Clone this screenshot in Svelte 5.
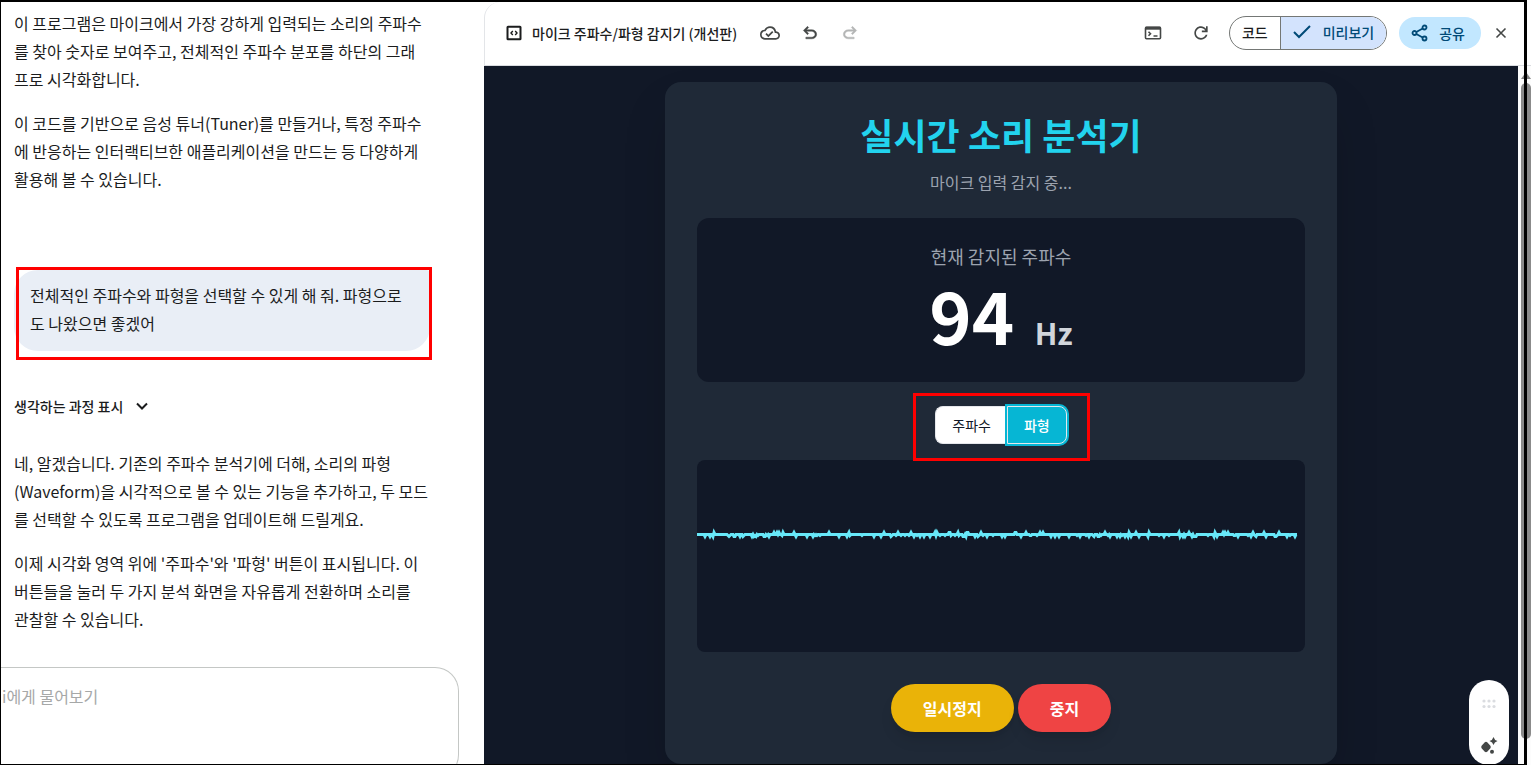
<script lang="ts">
  let mode: 'frequency' | 'waveform' = 'waveform';
  let view: 'code' | 'preview' = 'preview';
  let prompt = '';

  const frequency = 94;

  // small deterministic noise so the idle signal is stable between renders
  function buildWave(width: number, center: number) {
    let seed = 11;
    const points: string[] = [];
    for (let x = 0; x <= width; x += 1) {
      seed = (seed * 1103515245 + 12345) % 2147483648;
      const n = seed / 2147483648;
      let offset = 0;
      if (n > 0.92) offset = -2;
      else if (n < 0.1) offset = 2;
      else if (n < 0.18) offset = 1;
      points.push(`${x},${center + offset}`);
    }
    return points.join(' ');
  }

  const wave = buildWave(600, 74.5);
</script>

<div class="app">
  <aside class="chat">
    <div class="message">
      <p>이 프로그램은 마이크에서 가장 강하게 입력되는 소리의 주파수를 찾아 숫자로 보여주고, 전체적인 주파수 분포를 하단의 그래<br />프로 시각화합니다.</p>
      <p>이 코드를 기반으로 음성 튜너(Tuner)를 만들거나, 특정 주파수에 반응하는 인터랙티브한 애플리케이션을 만드는 등 다양하게 활용해 볼 수 있습니다.</p>
    </div>

    <div class="bubble">
      <p>전체적인 주파수와 파형을 선택할 수 있게 해 줘. 파형으로도 나왔으면 좋겠어</p>
      <span class="marker marker-bubble"></span>
    </div>

    <button class="thoughts" type="button">
      생각하는 과정 표시
      <svg width="14" height="14" viewBox="0 0 14 14" fill="none" stroke="currentColor" stroke-width="2">
        <path d="M2 4.5 7 9.5l5-5" />
      </svg>
    </button>

    <div class="message">
      <p>네, 알겠습니다. 기존의 주파수 분석기에 더해, 소리의 파형(Waveform)을 시각적으로 볼 수 있는 기능을 추가하고, 두 모드를 선택할 수 있도록 프로그램을 업데이트해 드릴게요.</p>
      <p>이제 시각화 영역 위에 '주파수'와 '파형' 버튼이 표시됩니다. 이 버튼들을 눌러 두 가지 분석 화면을 자유롭게 전환하며 소리를<br />관찰할 수 있습니다.</p>
    </div>

    <textarea class="prompt" bind:value={prompt} placeholder="i에게 물어보기" aria-label="i에게 물어보기"></textarea>
  </aside>

  <main class="panel">
    <header class="toolbar">
      <svg width="16" height="16" viewBox="0 0 16 16" fill="none" stroke="currentColor" stroke-width="2">
        <rect x="1.500" y="1.800" width="13" height="12.400" rx=".5" />
        <path d="M6.800 6 5 8l1.800 2M9.200 6 11 8l-1.800 2" stroke-width="1.400" />
      </svg>
      <h1>마이크 주파수/파형 감지기 (개선판)</h1>
      <button class="icon-button" type="button" aria-label="저장됨">
        <svg width="20" height="20" viewBox="0 0 24 24" fill="currentColor">
          <path d="M19.350 10.040A7.490 7.490 0 0 0 12 4C9.110 4 6.600 5.640 5.350 8.040A5.994 5.994 0 0 0 0 14c0 3.310 2.690 6 6 6h13c2.760 0 5-2.240 5-5 0-2.640-2.050-4.780-4.650-4.960zM19 18H6c-2.210 0-4-1.790-4-4 0-2.050 1.530-3.760 3.560-3.970l1.070-.110.500-.950A5.469 5.469 0 0 1 12 6c2.620 0 4.880 1.860 5.390 4.430l.300 1.500 1.530.110A2.980 2.980 0 0 1 22 15c0 1.650-1.350 3-3 3zm-9-3.820-2.090-2.090L6.500 13.500 10 17l6.010-6.010-1.410-1.410z" />
        </svg>
      </button>
      <button class="icon-button" type="button" aria-label="실행취소">
        <svg width="20" height="20" viewBox="0 0 24 24" fill="currentColor" stroke="currentColor" stroke-width=".5">
          <path d="M7 19v-2h7.100c1.050 0 1.960-.330 2.740-1s1.160-1.500 1.160-2.500-.390-1.830-1.160-2.500-1.690-1-2.740-1H7.800l2.600 2.600L9 14 4 9l5-5 1.400 1.400L7.800 8h6.300c1.620 0 3 .530 4.160 1.580S20 11.930 20 13.500s-.580 2.880-1.740 3.930S15.720 19 14.100 19z" />
        </svg>
      </button>
      <button class="icon-button redo" type="button" aria-label="다시 실행" disabled>
        <svg width="20" height="20" viewBox="0 0 24 24" fill="currentColor" stroke="currentColor" stroke-width=".5">
          <path d="M17 19v-2H9.900c-1.050 0-1.960-.330-2.740-1S6 14.500 6 13.500s.390-1.830 1.160-2.500 1.690-1 2.740-1h6.300l-2.600 2.600L15 14l5-5-5-5-1.400 1.400L16.200 8H9.900c-1.620 0-3 .530-4.160 1.580S4 11.930 4 13.500s.580 2.880 1.740 3.930S8.280 19 9.900 19z" />
        </svg>
      </button>

      <div class="toolbar-end">
        <button class="icon-button" type="button" aria-label="콘솔">
          <svg width="20" height="20" viewBox="0 0 20 20" fill="none" stroke="currentColor" stroke-width="1.600">
            <rect x="2.500" y="4.200" width="15" height="11.600" rx="1" />
            <path d="M2.500 5.200h15" stroke-width="3" />
            <path d="m5.500 8.700 2 2-2 2M10.500 13h4" />
          </svg>
        </button>
        <button class="icon-button refresh" type="button" aria-label="새로고침">
          <svg width="20" height="20" viewBox="0 0 24 24" fill="currentColor">
            <path d="M12 20c-2.230 0-4.130-.780-5.680-2.330S4 14.230 4 12s.780-4.130 2.330-5.680S9.770 4 12 4c1.150 0 2.250.240 3.300.710S17.250 5.870 18 6.750V4h2v7h-7V9h4.200a5.930 5.930 0 0 0-2.190-2.200A5.860 5.860 0 0 0 12 6c-1.670 0-3.080.580-4.250 1.750S6 10.330 6 12s.580 3.080 1.750 4.250S10.330 18 12 18c1.280 0 2.440-.370 3.480-1.100s1.750-1.700 2.170-2.900h2.100a7.850 7.850 0 0 1-2.950 4.350A7.740 7.740 0 0 1 12 20z" />
          </svg>
        </button>
        <div class="switch">
          <button type="button" class:active={view === 'code'} on:click={() => (view = 'code')}>코드</button>
          <button type="button" class:active={view === 'preview'} on:click={() => (view = 'preview')}>
            <svg width="18" height="14" viewBox="0 0 18 14" fill="none" stroke="currentColor" stroke-width="2">
              <path d="m1 7 5 5L17 1" />
            </svg>
            미리보기
          </button>
        </div>
        <button class="share" type="button">
          <svg width="18" height="18" viewBox="0 0 18 18" fill="none" stroke="currentColor" stroke-width="1.800">
            <circle cx="13.500" cy="3.500" r="2" />
            <circle cx="3.500" cy="9" r="2" />
            <circle cx="13.500" cy="14.500" r="2" />
            <path d="m5.300 8 6.400-3.500M5.300 10l6.400 3.500" />
          </svg>
          공유
        </button>
        <button class="icon-button close" type="button" aria-label="닫기">
          <svg width="12" height="12" viewBox="0 0 12 12" fill="none" stroke="currentColor" stroke-width="1.600">
            <path d="m1.500 1.500 9 9M10.500 1.500l-9 9" />
          </svg>
        </button>
      </div>
    </header>

    <div class="stage">
      <section class="preview">
        <div class="card">
          <h2>실시간 소리 분석기</h2>
          <p class="status">마이크 입력 감지 중...</p>

          <div class="readout">
            <p class="readout-label">현재 감지된 주파수</p>
            <p class="readout-value">{frequency} <span class="unit">Hz</span></p>
          </div>

          <div class="modes">
            <button type="button" class:selected={mode === 'frequency'} on:click={() => (mode = 'frequency')}>주파수</button>
            <button type="button" class:selected={mode === 'waveform'} on:click={() => (mode = 'waveform')}>파형</button>
            <span class="marker marker-modes"></span>
          </div>

          <svg class="scope" viewBox="0 0 608 192" preserveAspectRatio="none">
            <polyline points={wave} fill="none" stroke="#67e8f9" stroke-width="3" stroke-linejoin="miter" />
          </svg>

          <div class="controls">
            <button class="pause" type="button">일시정지</button>
            <button class="stop" type="button">중지</button>
          </div>
        </div>

        <div class="assist">
          <svg width="14" height="10" viewBox="0 0 14 10" fill="#dadce0">
            <circle cx="2" cy="2" r="1.600" />
            <circle cx="7" cy="2" r="1.600" />
            <circle cx="12" cy="2" r="1.600" />
            <circle cx="2" cy="7.500" r="1.600" />
            <circle cx="7" cy="7.500" r="1.600" />
            <circle cx="12" cy="7.500" r="1.600" />
          </svg>
          <svg width="18" height="18" viewBox="0 0 18 18" fill="#444746">
            <path d="M6 4.800q.7 0 1.200.5l3.200 3.500q.8 1.200 0 2.400l-3.200 3.500q-1.200.9-2.400 0l-3.200-3.500q-.8-1.200 0-2.400l3.200-3.500q.5-.5 1.200-.5z" />
            <path d="M13.500 0q.8 3.200 4 4-3.200.8-4 4-.8-3.200-4-4 3.200-.8 4-4z" />
            <circle cx="12" cy="14.800" r="2" />
          </svg>
        </div>
      </section>

      <div class="scrollbar">
        <svg width="10" height="7" viewBox="0 0 10 7" fill="#858585"><path d="M5 0 10 7H0z" /></svg>
        <span class="thumb"></span>
      </div>
    </div>
  </main>

  <span class="outline"></span>
</div>

<style>
  :global(body) {
    margin: 0;
    background: #fff;
  }

  .app {
    position: relative;
    display: flex;
    height: 100vh;
    overflow: hidden;
    box-sizing: border-box;
    padding-top: 2px;
    font-family: "Noto Sans CJK KR", sans-serif;
    font-size: 16px;
    color: #1b1c1d;
  }

  .app :global(*) {
    box-sizing: border-box;
  }

  p,
  h1,
  h2 {
    margin: 0;
  }

  button {
    display: inline-flex;
    align-items: center;
    justify-content: center;
    margin: 0;
    padding: 0;
    border: 0;
    background: none;
    color: inherit;
    font: inherit;
    cursor: pointer;
  }

  .outline {
    position: absolute;
    inset: 0 4px 0 0;
    border: 2px solid #000;
    border-right-width: 3px;
    border-left-width: 1px;
    border-bottom-width: 1px;
    pointer-events: none;
  }

  .marker {
    position: absolute;
    border: 3px solid #f00;
    pointer-events: none;
  }

  /* Chat column */
  .chat {
    display: flex;
    flex: 0 0 484px;
    flex-direction: column;
    align-items: flex-start;
    padding: 7px 24px 0 0;
    line-height: 28px;
  }

  .message {
    display: flex;
    flex-direction: column;
    gap: 16px;
    width: 432px;
    padding-left: 14px;
  }

  .bubble {
    position: relative;
    width: 416px;
    margin: 77px 0 0 14px;
    padding: 11px 16px 14px;
    border-radius: 24px 4px 24px 24px;
    background: #e9eef6;
  }

  .marker-bubble {
    inset: -3px -2px -9px 2px;
  }

  .thoughts {
    gap: 12px;
    height: 40px;
    margin: 41px 0 29px 14px;
    font-size: 14px;
    font-weight: 500;
  }

  .prompt {
    flex: none;
    width: 459px;
    height: 112px;
    margin-top: 34px;
    padding: 14px 24px 14px 2px;
    border: 1px solid #c4c7c5;
    border-left: 0;
    border-radius: 0 24px 24px 0;
    background: #fff;
    color: inherit;
    font: inherit;
    line-height: 28px;
    resize: none;
    outline: none;
  }

  .prompt::placeholder {
    color: #a6a8a8;
  }

  /* Canvas panel */
  .panel {
    display: flex;
    flex: 1;
    flex-direction: column;
    min-width: 0;
  }

  .toolbar {
    display: flex;
    flex: none;
    align-items: center;
    height: 64px;
    padding: 0 20px 2px 21px;
    border-bottom: 1px solid #dadce0;
    border-left: 1px solid #e3e5e8;
    border-top-left-radius: 16px;
    font-size: 14px;
    font-weight: 500;
  }

  .toolbar h1 {
    margin: 0 23px 0 10px;
    font-size: 14px;
    font-weight: 500;
    line-height: 20px;
    white-space: nowrap;
  }

  .icon-button {
    width: 20px;
    height: 20px;
    margin-right: 20px;
    color: #444746;
  }

  .redo {
    color: #b4b5b5;
  }

  .toolbar-end {
    display: flex;
    align-items: center;
    margin-left: auto;
  }

  .refresh {
    margin: 0 18px 0 8px;
  }

  .switch {
    display: flex;
    height: 34px;
    margin-right: 12px;
    border: 1px solid #747775;
    border-radius: 17px;
    overflow: hidden;
  }

  .switch button {
    gap: 12px;
    padding: 0 12px 2px;
  }

  .switch button + button {
    border-left: 1px solid #747775;
  }

  .switch .active {
    background: #d3e3fd;
    color: #004a77;
  }

  .share {
    gap: 10px;
    height: 32px;
    margin-right: 10px;
    padding: 0 16px 0 12px;
    border-radius: 16px;
    background: #c2e7ff;
    color: #004a77;
  }

  .close {
    margin: 0;
  }

  .stage {
    display: flex;
    flex: 1;
    min-height: 0;
  }

  .preview {
    position: relative;
    flex: 1;
    padding: 16px;
    background: #111827;
    overflow: hidden;
  }

  .card {
    display: flex;
    flex-direction: column;
    align-items: center;
    max-width: 672px;
    margin: 0 auto;
    padding: 32px;
    border-radius: 16px;
    background: #1f2937;
    box-shadow: 0 25px 50px -12px rgb(0 0 0 / 0.25);
  }

  .card h2 {
    color: #22d3ee;
    font-size: 36px;
    font-weight: 700;
    line-height: 40px;
  }

  .status {
    margin: 16px 0 24px;
    color: #9ca3af;
    line-height: 24px;
  }

  .readout {
    align-self: stretch;
    padding: 24px;
    border-radius: 12px;
    background: #111827;
    text-align: center;
  }

  .readout-label {
    color: #9ca3af;
    font-size: 18px;
    line-height: 28px;
  }

  .readout-value {
    margin: 8px 0;
    color: #fff;
    font-size: 72px;
    font-weight: 700;
    line-height: 72px;
  }

  .unit {
    margin-left: 4px;
    color: #d1d5db;
    font-size: 30px;
    line-height: 36px;
  }

  .modes {
    position: relative;
    display: flex;
    margin: 24px 0 16px;
  }

  .modes button {
    padding: 8px 16px;
    border: 1px solid #e5e7eb;
    background: #fff;
    color: #111827;
    font-size: 14px;
    line-height: 20px;
  }

  .modes button:first-child {
    border-right: 0;
    border-radius: 8px 0 0 8px;
  }

  .modes button:nth-child(2) {
    border-radius: 0 8px 8px 0;
  }

  .modes .selected {
    background: #06b6d4;
    color: #fff;
    font-weight: 500;
    box-shadow: 0 0 0 2px #06b6d4;
  }

  .marker-modes {
    inset: -13px -23px -17px -22px;
  }

  .scope {
    width: 100%;
    height: 192px;
    border-radius: 8px;
    background: #111827;
  }

  .controls {
    display: flex;
    gap: 4px;
    margin-top: 32px;
  }

  .controls button {
    padding: 12px 32px;
    border-radius: 24px;
    color: #fff;
    font-weight: 700;
    line-height: 24px;
    box-shadow: 0 10px 15px -3px rgb(0 0 0 / 0.1), 0 4px 6px -4px rgb(0 0 0 / 0.1);
  }

  .controls .pause {
    background: #eab308;
  }

  .controls .stop {
    background: #ef4444;
  }

  /* Floating helper over the preview */
  .assist {
    position: absolute;
    right: 9px;
    bottom: 0;
    display: flex;
    flex-direction: column;
    align-items: center;
    justify-content: space-between;
    width: 40px;
    height: 85px;
    padding: 19px 0 10px;
    border-radius: 20px;
    background: #fff;
  }

  .scrollbar {
    display: flex;
    flex: 0 0 13px;
    flex-direction: column;
    align-items: center;
    gap: 4px;
    padding: 6px 0 26px 2px;
    background: #fcfcfc;
  }

  .thumb {
    flex: 1;
    width: 10px;
    border-radius: 5px;
    background: #8b8b8b;
  }
</style>
